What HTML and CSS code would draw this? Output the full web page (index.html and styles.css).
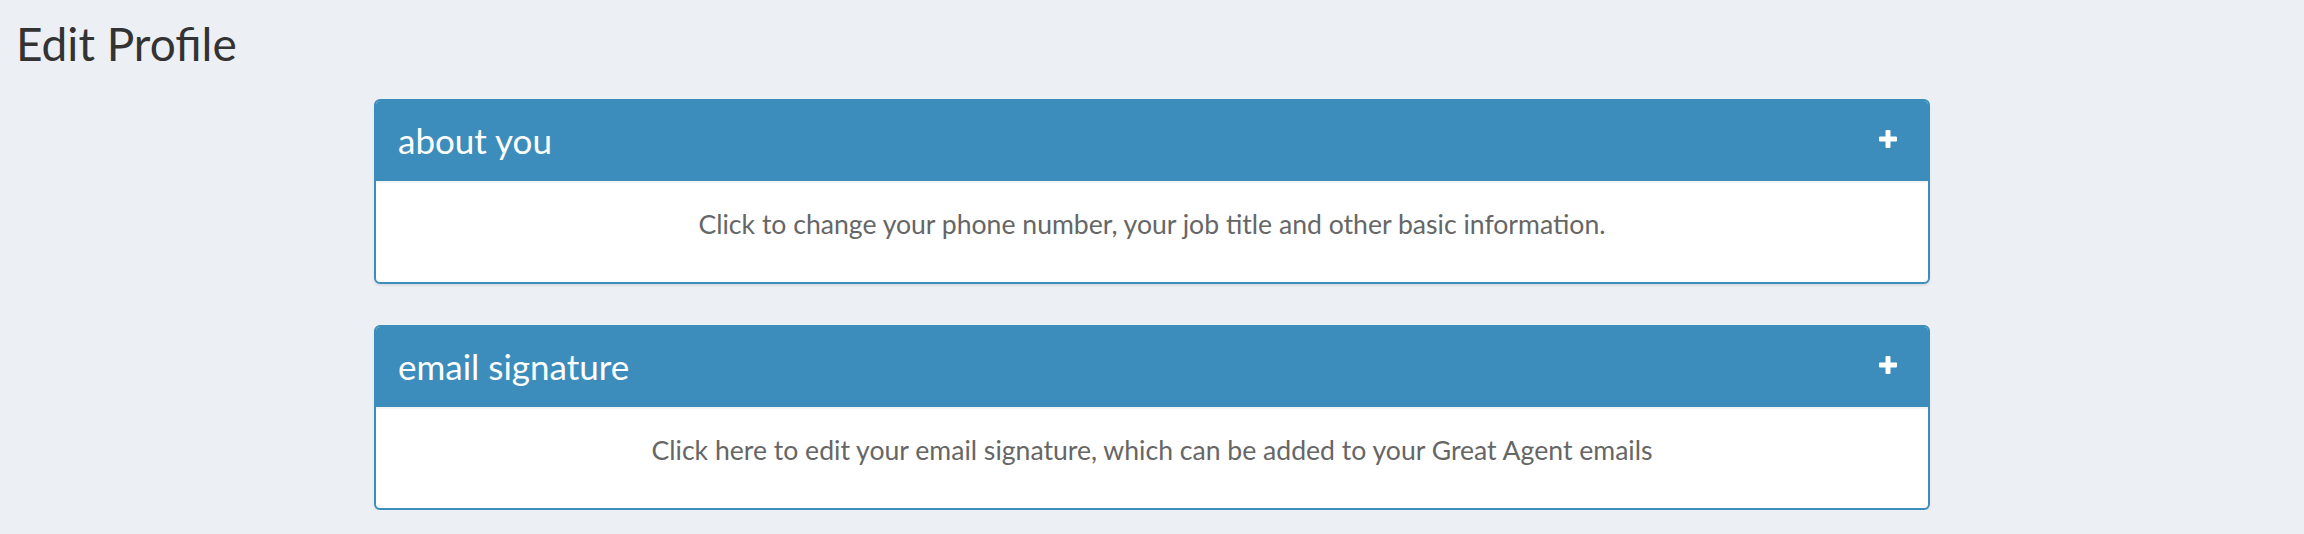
FILE: index.html
```html
<!DOCTYPE html>
<html lang="en">
<head>
<meta charset="utf-8">
<title>Edit Profile</title>
<link rel="stylesheet" href="styles.css">
</head>
<body>
<div class="page">
  <h1 class="page-title">Edit Profile</h1>
  <div class="panels">
    <section class="box">
      <header class="box-header">
        <h3 class="box-title">about you</h3>
        <svg class="plus" width="20" height="20" viewBox="0 0 20 20" aria-hidden="true">
          <rect x="7.5" y="1" width="5" height="18" rx="1" fill="#fff"/>
          <rect x="1" y="7.5" width="18" height="5" rx="1" fill="#fff"/>
        </svg>
      </header>
      <div class="box-body">
        <p class="box-text">Click to change your phone number, your job title and other basic information.</p>
      </div>
    </section>
    <section class="box">
      <header class="box-header">
        <h3 class="box-title">email signature</h3>
        <svg class="plus" width="20" height="20" viewBox="0 0 20 20" aria-hidden="true">
          <rect x="7.5" y="1" width="5" height="18" rx="1" fill="#fff"/>
          <rect x="1" y="7.5" width="18" height="5" rx="1" fill="#fff"/>
        </svg>
      </header>
      <div class="box-body">
        <p class="box-text">Click here to edit your email signature, which can be added to your Great Agent emails</p>
      </div>
    </section>
  </div>
</div>
</body>
</html>
```

FILE: styles.css
```css
html, body {
  margin: 0;
  padding: 0;
  background: #ecf0f5;
}

body {
  font-family: "Source Sans Pro", Lato, "Liberation Sans", sans-serif;
  color: #333;
}

.page-title {
  margin: 0;
  padding: 16px 0 0 16px;
  height: 99px;
  box-sizing: border-box;
  font-size: 46px;
  font-weight: 400;
  line-height: 56px;
  color: #333;
}

.panels {
  width: 1556px;
  margin: 0 auto;
  display: flex;
  flex-direction: column;
  gap: 41px;
}

.box {
  border: 2px solid #3c8dbc;
  border-radius: 6px;
  background: #fff;
  box-shadow: 0 2px 2px rgba(0, 0, 0, 0.08);
  overflow: hidden;
}

.box-header {
  height: 82px;
  box-sizing: border-box;
  background: #3c8dbc;
  border-bottom: 2px solid #f4f4f4;
  display: flex;
  align-items: center;
  justify-content: space-between;
  padding: 0 30px 0 22px;
}

.box-title {
  margin: -3px 0 0;
  font-size: 35px;
  font-weight: 400;
  line-height: 40px;
  color: #fff;
}

.plus {
  display: block;
  margin-top: -4px;
}

.box-body {
  height: 99px;
  box-sizing: border-box;
  padding: 21px 20px 0;
}

.box-text {
  margin: 0;
  text-align: center;
  font-size: 26.6px;
  line-height: 40px;
  color: #666;
}
```
